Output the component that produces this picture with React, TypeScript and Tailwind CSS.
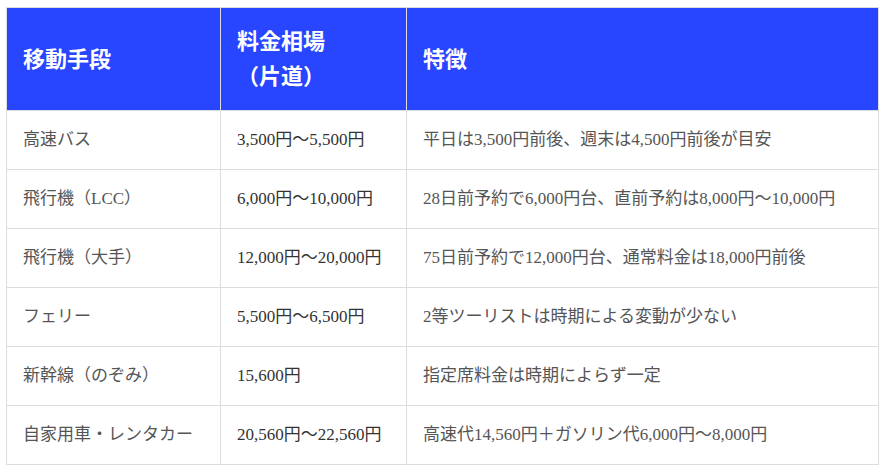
const rows = [
  ['高速バス', '3,500円〜5,500円', '平日は3,500円前後、週末は4,500円前後が目安'],
  ['飛行機（LCC）', '6,000円〜10,000円', '28日前予約で6,000円台、直前予約は8,000円〜10,000円'],
  ['飛行機（大手）', '12,000円〜20,000円', '75日前予約で12,000円台、通常料金は18,000円前後'],
  ['フェリー', '5,500円〜6,500円', '2等ツーリストは時期による変動が少ない'],
  ['新幹線（のぞみ）', '15,600円', '指定席料金は時期によらず一定'],
  ['自家用車・レンタカー', '20,560円〜22,560円', '高速代14,560円＋ガソリン代6,000円〜8,000円'],
];

export default function App() {
  return (
    <div className="min-h-screen bg-white pl-[6px] pt-[7px] font-['Liberation_Serif','Noto_Sans_CJK_JP',serif]">
      <table className="w-[873px] table-fixed border-collapse border border-[#dddddd]">
        <colgroup>
          <col className="w-[214px]" />
          <col className="w-[186px]" />
          <col />
        </colgroup>
        <thead>
          <tr className="h-[103px] bg-[#2845ff] text-white">
            <th className="border border-[#dddddd] px-4 text-left text-[22px] font-bold leading-[35px]">移動手段</th>
            <th className="border border-[#dddddd] px-4 text-left text-[22px] font-bold leading-[35px]">
              料金相場
              <br />
              （片道）
            </th>
            <th className="border border-[#dddddd] px-4 text-left text-[22px] font-bold leading-[35px]">特徴</th>
          </tr>
        </thead>
        <tbody>
          {rows.map((r) => (
            <tr key={r[0]} className="h-[59px]">
              <td className="border border-[#dddddd] px-4 text-[17px] text-[#555555]">{r[0]}</td>
              <td className="border border-[#dddddd] px-4 text-[17px] text-[#333333]">{r[1]}</td>
              <td className="border border-[#dddddd] px-4 text-[17px] text-[#555555]">{r[2]}</td>
            </tr>
          ))}
        </tbody>
      </table>
    </div>
  );
}
